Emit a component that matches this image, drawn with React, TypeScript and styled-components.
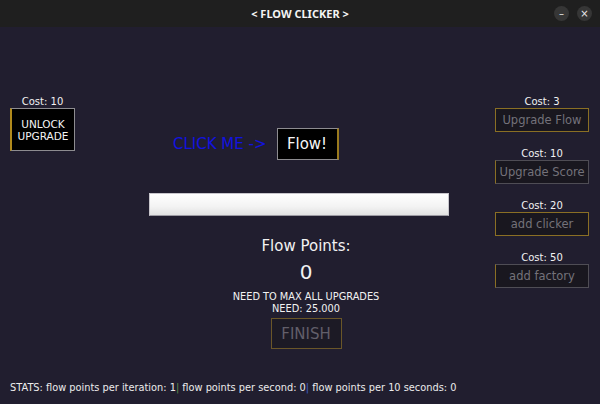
import styled, {createGlobalStyle} from 'styled-components';

const bg = '#211e2f';
const gold = '#8a6f24';
const dimText = '#74727a';

const GlobalStyle = createGlobalStyle`
  html, body {
    margin: 0;
    padding: 0;
    background: ${bg};
  }
  body {
    font-family: "DejaVu Sans", Verdana, sans-serif;
    color: #f2f2f2;
  }
`;

const upgrades = [
  {cost: 3, label: 'Upgrade Flow', tone: 'gold' as const},
  {cost: 10, label: 'Upgrade Score', tone: 'gray' as const},
  {cost: 20, label: 'add clicker', tone: 'gold' as const},
  {cost: 50, label: 'add factory', tone: 'gray' as const},
];

export default function App() {
  return (
    <Window>
      <GlobalStyle/>
      <TitleBar>
        <Title>&lt; FLOW CLICKER &gt;</Title>
        <WindowControls>
          <RoundBtn>&#8211;</RoundBtn>
          <RoundBtn>&#215;</RoundBtn>
        </WindowControls>
      </TitleBar>

      <Body>
        <LeftColumn>
          <UnlockGroup>
            <CostLabel>Cost: 10</CostLabel>
            <UnlockButton>UNLOCK<br/>UPGRADE</UnlockButton>
          </UnlockGroup>
        </LeftColumn>

        <CenterColumn>
          <ClickRow>
            <ClickHint>CLICK ME -&gt;</ClickHint>
            <FlowButton>Flow!</FlowButton>
          </ClickRow>
          <ProgressBar/>
          <PointsTitle>Flow Points:</PointsTitle>
          <PointsValue>0</PointsValue>
          <Notice>NEED TO MAX ALL UPGRADES<br/>NEED: 25.000</Notice>
          <FinishButton>FINISH</FinishButton>
        </CenterColumn>

        <RightColumn>
          {upgrades.map(u => (
            <UpgradeGroup key={u.label}>
              <CostLabel>Cost: {u.cost}</CostLabel>
              <UpgradeButton tone={u.tone}>{u.label}</UpgradeButton>
            </UpgradeGroup>
          ))}
        </RightColumn>
      </Body>

      <Stats>
        STATS: flow points per iteration: 1<Sep color="#5f8f4a">|</Sep> flow points per second: 0<Sep color="#3f5fd0">|</Sep> flow points per 10 seconds: 0
      </Stats>
    </Window>
  );
}

const Window = styled.div`
  width: 600px;
  height: 404px;
  display: flex;
  flex-direction: column;
  background: ${bg};
  overflow: hidden;
`;

const TitleBar = styled.div`
  position: relative;
  height: 27px;
  background: #1f1f1f;
  display: flex;
  align-items: center;
  justify-content: center;
  flex-shrink: 0;
`;

const Title = styled.div`
  font-family: "Noto Sans", "DejaVu Sans", sans-serif;
  font-size: 11px;
  font-weight: bold;
  color: #f4f4f4;
`;

const WindowControls = styled.div`
  position: absolute;
  right: 8px;
  top: 6px;
  display: flex;
  gap: 8px;
`;

const RoundBtn = styled.div`
  width: 15px;
  height: 15px;
  border-radius: 50%;
  background: #363636;
  color: #e8e8e8;
  font-size: 10px;
  line-height: 15px;
  text-align: center;
`;

const Body = styled.div`
  flex: 1;
  display: flex;
`;

const LeftColumn = styled.div`
  width: 149px;
  padding: 69px 0 0 10px;
  box-sizing: border-box;
`;

const UnlockGroup = styled.div`
  width: 65px;
  display: flex;
  flex-direction: column;
  align-items: center;
`;

const CostLabel = styled.div`
  font-size: 10px;
  line-height: 12px;
  color: #f2f2f2;
  align-self: center;
`;

const UnlockButton = styled.div`
  width: 65px;
  height: 43px;
  box-sizing: border-box;
  background: #000;
  border: 1px solid #8d8c90;
  border-left: 2px solid #b08a1c;
  color: #f4f4f4;
  font-size: 10.5px;
  line-height: 12px;
  display: flex;
  align-items: center;
  justify-content: center;
  text-align: center;
`;

const CenterColumn = styled.div`
  width: 314px;
  padding-top: 101px;
  box-sizing: border-box;
  display: flex;
  flex-direction: column;
  align-items: center;
`;

const ClickRow = styled.div`
  align-self: flex-start;
  margin-left: 24px;
  display: flex;
  align-items: center;
  gap: 10px;
`;

const ClickHint = styled.div`
  color: #1212e0;
  font-size: 15px;
`;

const FlowButton = styled.div`
  width: 62px;
  height: 32px;
  box-sizing: border-box;
  background: #000;
  border: 1px solid #8d8c90;
  border-right: 2px solid #9a7a1e;
  color: #f6f6f6;
  font-size: 15px;
  display: flex;
  align-items: center;
  justify-content: center;
`;

const ProgressBar = styled.div`
  align-self: flex-start;
  width: 300px;
  height: 23px;
  margin-top: 33px;
  box-sizing: border-box;
  border: 1px solid #c8c6cc;
  border-bottom-color: #9c9aa2;
  background: linear-gradient(#ffffff, #f3f3f3 60%, #e2e2e2);
`;

const PointsTitle = styled.div`
  margin-top: 21px;
  font-size: 15px;
  line-height: 18px;
`;

const PointsValue = styled.div`
  margin-top: 5px;
  font-size: 20px;
  line-height: 24px;
`;

const Notice = styled.div`
  margin-top: 7px;
  font-size: 9.8px;
  line-height: 12px;
  text-align: center;
`;

const FinishButton = styled.div`
  margin-top: 3px;
  width: 71px;
  height: 31px;
  box-sizing: border-box;
  background: #1c1a25;
  border: 1px solid #6a5628;
  color: #625f6a;
  font-size: 15px;
  display: flex;
  align-items: center;
  justify-content: center;
`;

const RightColumn = styled.div`
  flex: 1;
  padding: 69px 0 0 32px;
  display: flex;
  flex-direction: column;
  gap: 16px;
`;

const UpgradeGroup = styled.div`
  width: 94px;
  display: flex;
  flex-direction: column;
`;

const UpgradeButton = styled.div<{tone: 'gold' | 'gray'}>`
  height: 24px;
  box-sizing: border-box;
  background: #19171f;
  border: 1px solid ${({tone}) => (tone === 'gold' ? gold : '#4f4d55')};
  border-left-color: ${gold};
  color: ${dimText};
  font-size: 11.5px;
  display: flex;
  align-items: center;
  justify-content: center;
  white-space: nowrap;
`;

const Stats = styled.div`
  margin-bottom: 10px;
  padding-left: 10px;
  font-size: 9.8px;
  line-height: 12px;
  color: #ececec;
  flex-shrink: 0;
`;

const Sep = styled.span<{color: string}>`
  color: ${({color}) => color};
`;
